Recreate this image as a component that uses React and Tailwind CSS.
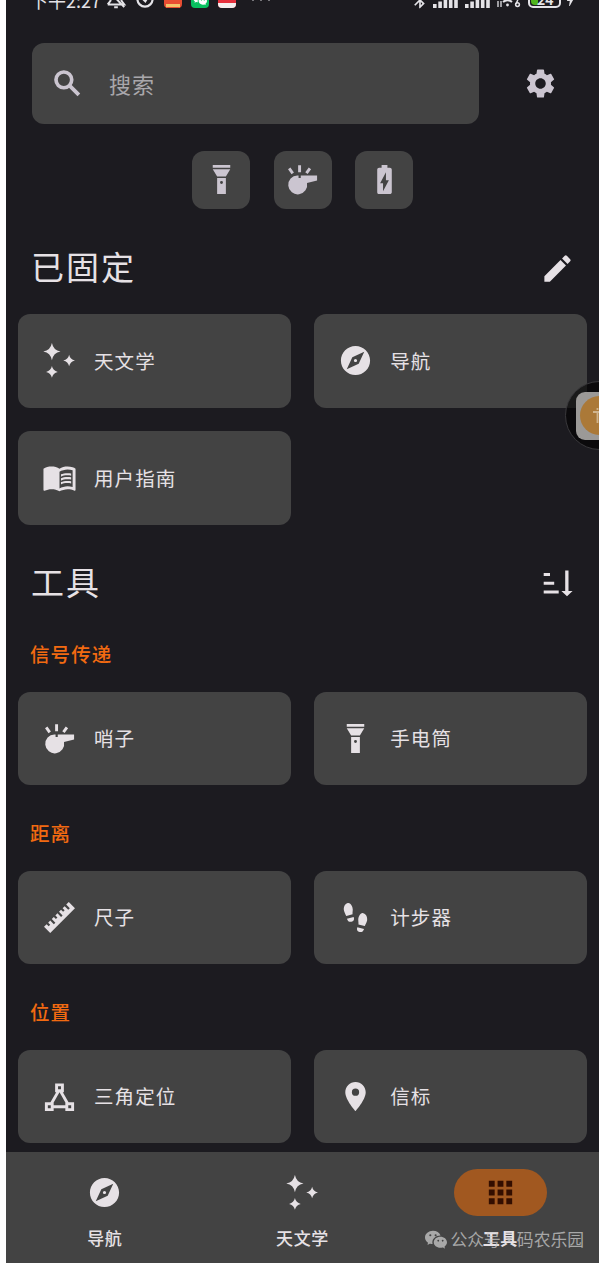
import React from "react";
import {
  MdSettings,
  MdEdit,
  MdExplore,
  MdMenuBook,
  MdLocationOn,
  MdApps,
  MdBatteryChargingFull,
  MdBluetooth,
  MdBolt,
} from "react-icons/md";
import { BsWechat } from "react-icons/bs";

const Icon = ({ size = 35, children }) => (
  <svg width={size} height={size} viewBox="0 0 24 24" fill="currentColor">
    {children}
  </svg>
);

const Search = (props) => (
  <Icon {...props}>
    <g fill="none" stroke="currentColor" strokeWidth="2.5">
      <circle cx="9.5" cy="9.5" r="5.4" />
      <path d="M13.6 13.6L19.8 19.8" strokeWidth="2.6" />
    </g>
  </Icon>
);

const Flashlight = (props) => (
  <Icon {...props}>
    <path d="M9,10L6,5H18L15,10H9M18,4H6V2H18V4M9,22V11H15V22H9M12,13A1,1 0 0,0 11,14A1,1 0 0,0 12,15A1,1 0 0,0 13,14A1,1 0 0,0 12,13Z" />
  </Icon>
);

const Whistle = (props) => (
  <Icon {...props}>
    <path d="M8.5 9.2H9.3V10.9H10.8V9.2H22V12.6L15.1 14.4A6.5 6.5 0 1 1 8.5 9.2Z" />
    <path
      d="M10 2.2V7M2.9 4.4L5.3 7.8M17.1 4.3L14.7 7.6"
      fill="none"
      stroke="currentColor"
      strokeWidth="2"
    />
  </Icon>
);

const Stars = (props) => (
  <Icon {...props}>
    <path d="M6.8 -.1Q7.7 5 12.7 5.9Q7.7 6.8 6.8 11.9Q5.9 6.8 .9 5.9Q5.9 5 6.8 -.1Z" />
    <path d="M18.6 8Q19.3 11.3 22.6 12Q19.3 12.7 18.6 16Q17.9 12.7 14.6 12Q17.9 11.3 18.6 8Z" />
    <path d="M6.8 15.8Q7.5 19.1 10.8 19.8Q7.5 20.5 6.8 23.8Q6.1 20.5 2.8 19.8Q6.1 19.1 6.8 15.8Z" />
  </Icon>
);

const Ruler = (props) => (
  <Icon {...props}>
    <path d="M1.39,18.36L3.16,16.6L4.58,18L5.64,16.95L4.22,15.54L5.64,14.12L8.11,16.6L9.17,15.54L6.7,13.06L8.11,11.65L9.53,13.06L10.59,12L9.17,10.59L10.59,9.17L13.06,11.65L14.12,10.59L11.65,8.11L13.06,6.7L14.47,8.11L15.54,7.05L14.12,5.64L15.54,4.22L18,6.7L19.07,5.64L16.6,3.16L18.36,1.39L22.61,5.64L5.64,22.61L1.39,18.36Z" />
  </Icon>
);

const Steps = (props) => (
  <Icon {...props}>
    <path d="M10.74,11.72C11.21,12.95 11.16,14.23 9.75,14.74C6.85,15.81 6.2,13 6.16,12.86L10.74,11.72M5.71,10.91L10.03,9.84C9.84,8.79 10.13,7.74 10.13,6.5C10.13,4.82 8.8,1.53 6.68,2.06C4.26,2.66 3.91,5.35 4,6.65C4.12,7.95 5.64,10.73 5.71,10.91M17.85,19.85C17.82,20 17.16,22.8 14.26,21.74C12.86,21.22 12.8,19.94 13.27,18.71L17.85,19.85M20,13.65C20.1,12.35 19.76,9.65 17.33,9.05C15.22,8.5 13.89,11.81 13.89,13.5C13.89,14.73 14.17,15.78 14,16.83L18.3,17.9C18.38,17.72 19.89,14.94 20,13.65Z" />
  </Icon>
);

const Triangle = (props) => (
  <Icon {...props}>
    <path d="M9,3V9H9.73L5.79,16H2V22H8V20H16V22H22V16H18.21L14.27,9H15V3M11,5H13V7H11M12,9.04L16,16.15V18H8V16.15M4,18H6V20H4M18,18H20V20H18" />
  </Icon>
);

const SortDown = () => (
  <svg width="30" height="28" viewBox="0 0 30 28" fill="currentColor">
    <path d="M.7 4h6.3v3H.7zM.7 12.8h10.5v3H.7zM.7 21.5h15v3H.7zM22.2 1.5h3.3V22H29.6l-5.6 5.3L18.4 22h3.8z" />
  </svg>
);

const Signal = () => (
  <svg width="25" height="16" viewBox="0 0 25 16" fill="currentColor">
    <path d="M0 12h3.6v4H0zM5.3 9.5h3.6V16H5.3zM10.6 7h3.6v9h-3.6zM15.9 4h3.6v12h-3.6zM21.2 0h3.6v16h-3.6z" />
  </svg>
);

const StatusBar = () => (
  <div className="h-[43px] relative -mt-3 mb-3 text-[#e4e3e7]">
    <div className="flex h-5 items-end pl-[24px]">
      <span className="-mb-[3px] w-[70px] text-[18px] leading-[22px] whitespace-nowrap">
        下午2:27
      </span>
      <svg width="22" height="22" viewBox="0 0 24 24" className="ml-[5px] -mb-px" fill="none" stroke="currentColor" strokeWidth="2.2">
        <path d="M3 19h18l-3-4V9a6 6 0 0 0-9-5M6 9v6l-3 4M10 22h4M3 3l18 19" />
      </svg>
      <svg width="18" height="18" viewBox="0 0 18 18" className="ml-[9px]" fill="none" stroke="currentColor" strokeWidth="2.2">
        <circle cx="9" cy="9" r="7.6" />
        <path d="M6.5 8.5l2.8 2.7 3-5" />
      </svg>
      <div className="ml-[10px] h-[18px] w-[18px] rounded bg-[#e84d32] overflow-hidden flex flex-col justify-end">
        <div className="h-1 mx-[2px] bg-[#f3c36a] border-b border-[#e84d32]"></div>
      </div>
      <div className="ml-[9px] h-[18px] w-[18px] rounded bg-[#08c160] flex items-center justify-center text-white">
        <BsWechat size={14} />
      </div>
      <div className="ml-[9px] h-[18px] w-[18px] rounded bg-[#e5303c] overflow-hidden flex flex-col justify-end">
        <div className="h-[5px] bg-[#f3eeee]"></div>
      </div>
      <div className="ml-[16px] mb-[7px] flex gap-[6px]">
        <i className="size-[2px] bg-[#77767b]"></i>
        <i className="size-[2px] bg-[#77767b]"></i>
        <i className="size-[2px] bg-[#77767b]"></i>
      </div>
      <div className="ml-auto mr-[20px] flex items-end">
        <MdBluetooth size={20} className="mr-[3px] -mb-[2px]" />
        <Signal />
        <div className="w-[7px]"></div>
        <Signal />
        <svg width="26" height="18" viewBox="0 0 26 18" className="ml-[6px]" fill="none" stroke="currentColor" strokeWidth="2">
          <path d="M4 8a11 11 0 0 1 15 0M7 12a7 7 0 0 1 9 0" />
          <circle cx="11.5" cy="15" r="1.4" fill="currentColor" stroke="none" />
          <path d="M2 11v6M5 11v6" strokeWidth="1.3" />
          <circle cx="21.5" cy="14.6" r="1.9" strokeWidth="1.5" />
          <path d="M20 14l1.8-4" strokeWidth="1.5" />
        </svg>
        <div className="ml-[6px] h-[18px] w-[33px] rounded-[5px] border-2 border-[#e4e3e7] p-px flex">
          <div className="h-full w-[7px] rounded-l-sm bg-[#50b51d]"></div>
          <span className="-ml-px text-[14px] leading-[12px] font-bold">24</span>
        </div>
        <MdBolt size={17} className="ml-[1px]" />
      </div>
    </div>
  </div>
);

const Shortcut = ({ children }) => (
  <button className="flex h-[58px] w-[58px] items-center justify-center rounded-xl bg-[#434343] text-[#cbc5d0]">
    {children}
  </button>
);

const ToolCard = ({ icon: ToolIcon, label }) => (
  <div className="flex h-[93.5px] items-center rounded-xl bg-[#434343] pl-[23.5px] text-[#e6e1e5]">
    <ToolIcon size={35} />
    <span className="ml-[17.5px] pb-px text-[19.5px] tracking-[1.1px]">
      {label}
    </span>
  </div>
);

const ToolGrid = ({ tools }) => (
  <div className="grid grid-cols-2 gap-[23.5px]">
    {tools.map((tool) => (
      <ToolCard key={tool.label} {...tool} />
    ))}
  </div>
);

const pinned = [
  { icon: Stars, label: "天文学" },
  { icon: MdExplore, label: "导航" },
  { icon: MdMenuBook, label: "用户指南" },
];

const categories = [
  {
    title: "信号传递",
    tools: [
      { icon: Whistle, label: "哨子" },
      { icon: Flashlight, label: "手电筒" },
    ],
  },
  {
    title: "距离",
    tools: [
      { icon: Ruler, label: "尺子" },
      { icon: Steps, label: "计步器" },
    ],
  },
  {
    title: "位置",
    tools: [
      { icon: Triangle, label: "三角定位" },
      { icon: MdLocationOn, label: "信标" },
    ],
  },
];

const tabs = [
  { icon: MdExplore, label: "导航" },
  { icon: Stars, label: "天文学" },
  { icon: MdApps, label: "工具", active: true },
];

const App = () => {
  return (
    <div className="h-[1263px] w-[603px] overflow-hidden bg-white pl-[6px] font-['Noto_Sans_CJK_SC',sans-serif]">
      <div className="relative flex h-full w-[593px] flex-col overflow-hidden bg-[#1c1b20]">
        <StatusBar />

        <div className="flex-1 overflow-hidden px-[12px] -mt-3 pt-3">
          {/* Search */}
          <div className="flex items-center pl-[14px]">
            <div className="flex h-[81px] w-[447px] items-center rounded-xl bg-[#434343] pl-[18px] text-[#cbc5d0]">
              <Search size={35} />
              <span className="ml-[24px] pb-px text-[22px] tracking-[1px] text-[#a9a7ab]">
                搜索
              </span>
            </div>
            <MdSettings size={35} className="ml-[44px] text-[#cbc5d0]" />
          </div>

          {/* Quick actions */}
          <div className="mt-[26.5px] flex justify-center gap-[23.5px]">
            <Shortcut>
              <Flashlight />
            </Shortcut>
            <Shortcut>
              <Whistle />
            </Shortcut>
            <Shortcut>
              <MdBatteryChargingFull size={35} />
            </Shortcut>
          </div>

          {/* Pinned */}
          <div className="flex h-[105.5px] items-center justify-between pt-[14px] pl-[13px] pr-[12px] text-[#e6e1e5]">
            <h2 className="pb-[4px] text-[33px] tracking-[2px]">已固定</h2>
            <MdEdit size={35} />
          </div>
          <ToolGrid tools={pinned} />

          {/* All tools */}
          <div className="flex h-[116px] items-center justify-between pl-[13px] pr-[14px] text-[#e6e1e5]">
            <h2 className="pb-[2px] text-[33px] tracking-[2px]">工具</h2>
            <SortDown />
          </div>
          {categories.map((category) => (
            <section key={category.title} className="mb-[34.5px]">
              <h3 className="mb-[25px] h-[26px] pl-[12px] text-[19.5px] leading-[26px] font-medium tracking-[1.1px] text-[#f26a11]">
                {category.title}
              </h3>
              <ToolGrid tools={category.tools} />
            </section>
          ))}
        </div>

        {/* Bottom navigation */}
        <nav className="relative grid h-[111px] shrink-0 grid-cols-3 bg-[#434343] pt-[17px]">
          {tabs.map(({ icon: TabIcon, label, active }) => (
            <div key={label} className="flex flex-col items-center text-[#e6e1e5]">
              <div
                className={
                  active
                    ? "flex h-[47px] w-[93px] items-center justify-center rounded-full bg-[#a15820] text-[#330e00]"
                    : "flex h-[47px] w-[93px] items-center justify-center"
                }
              >
                <TabIcon size={35} />
              </div>
              <span
                className={
                  active
                    ? "mt-[9px] text-[17px] leading-[26px] font-bold tracking-[0.4px]"
                    : "mt-[9px] text-[17px] leading-[26px] font-medium tracking-[0.6px]"
                }
              >
                {label}
              </span>
            </div>
          ))}
          <div className="absolute right-[15px] bottom-[11px] flex items-center text-[#c9c9c9]/75">
            <BsWechat size={22} />
            <span className="ml-[4px] flex text-[16.8px] leading-[26px] whitespace-nowrap">
              公众号
              <span className="w-[16px] text-center">·</span>
              码农乐园
            </span>
          </div>
        </nav>

        {/* Floating assistive button, half off the edge */}
        <div className="absolute top-[381px] left-[559px] flex h-[69px] w-[69px] items-center justify-center rounded-full border border-[#39383b] bg-black/60">
          <div className="flex h-[48px] w-[48px] items-center justify-center rounded-[9px] bg-[#9b9997]">
            <div className="flex h-[39px] w-[39px] items-center justify-center rounded-full bg-[#ab7938]">
              <svg width="16" height="20" viewBox="0 0 16 20" fill="none" stroke="#d0b48d" strokeWidth="1.8">
                <path d="M1 6h13M5.5 6v11M5.5 2v2" />
              </svg>
            </div>
          </div>
        </div>
      </div>
    </div>
  );
};

export default App;
